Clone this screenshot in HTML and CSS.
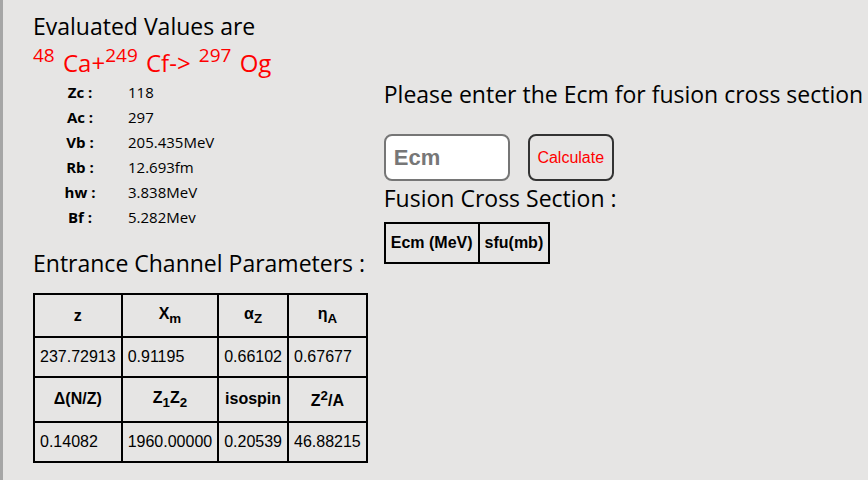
FILE: index.html
```html
<!DOCTYPE html>
<html lang="en">
  <head>
    <meta charset="UTF-8" />
    <title>Fusion Calculator</title>
    <link rel="stylesheet" href="styles.css">
  </head>
  <body>
    <div class="page">
      <div class="left">
        <h2 class="title">Evaluated Values are</h2>
        <div class="reaction"><sup>48</sup> Ca+<sup>249</sup> Cf-&gt; <sup>297</sup> Og</div>

        <div class="values">
          <b>Zc :</b><span>118</span>
          <b>Ac :</b><span>297</span>
          <b>Vb :</b><span>205.435MeV</span>
          <b>Rb :</b><span>12.693fm</span>
          <b>hw :</b><span>3.838MeV</span>
          <b>Bf :</b><span>5.282Mev</span>
        </div>

        <h2 class="entrance">Entrance Channel Parameters :</h2>
        <table class="grid">
          <tr>
            <th>z</th>
            <th>X<sub>m</sub></th>
            <th>&alpha;<sub>Z</sub></th>
            <th>&eta;<sub>A</sub></th>
          </tr>
          <tr>
            <td>237.72913</td>
            <td>0.91195</td>
            <td>0.66102</td>
            <td>0.67677</td>
          </tr>
          <tr>
            <th>&Delta;(N/Z)</th>
            <th>Z<sub>1</sub>Z<sub>2</sub></th>
            <th>isospin</th>
            <th>Z<sup>2</sup>/A</th>
          </tr>
          <tr>
            <td>0.14082</td>
            <td>1960.00000</td>
            <td>0.20539</td>
            <td>46.88215</td>
          </tr>
        </table>
      </div>

      <div class="right">
        <h2 class="prompt">Please enter the Ecm for fusion cross section</h2>
        <div class="form">
          <input type="number" id="ecm" placeholder="Ecm" />
          <button>Calculate</button>
        </div>
        <h2 class="fusion">Fusion Cross Section :</h2>
        <table class="grid">
          <tr>
            <th>Ecm (MeV)</th>
            <th>sfu(mb)</th>
          </tr>
        </table>
      </div>
    </div>
  </body>
</html>
```

FILE: styles.css
```css
html {
  background-color: #e6e5e4;
}

body {
  margin: 0;
  height: 480px;
  overflow: hidden;
  border-left: 3px solid #a6a6a6;
  color: #000;
  font-family: "Open Sans", sans-serif;
}

.page {
  display: flex;
  gap: 16px;
  padding-left: 30px;
}

.left {
  flex: none;
}

.right {
  flex: none;
  white-space: nowrap;
}

h2 {
  font-size: 23px;
  font-weight: 400;
  line-height: 28px;
  margin: 0;
}

.title {
  margin-top: 12px;
}

.reaction {
  margin-top: 8px;
  color: red;
  font-size: 24px;
  line-height: 30px;
  word-spacing: 2px;
}

.reaction sup {
  font-size: 19px;
  line-height: 0;
  vertical-align: 10px;
}

.values {
  display: grid;
  grid-template-columns: 36px auto;
  column-gap: 30px;
  margin: 2px 0 0 29px;
  font-size: 15px;
  line-height: 25px;
}

.values b {
  text-align: center;
  white-space: nowrap;
}

.entrance {
  margin-top: 19px;
}

.grid {
  margin-top: 16px;
  border-collapse: collapse;
  font-family: "Liberation Sans", Arial, sans-serif;
  font-size: 16px;
}

.grid th,
.grid td {
  border: 2px solid #000;
  padding: 10px 5px;
}

.grid td {
  text-align: left;
}

.prompt {
  margin-top: 80px;
}

.form {
  display: flex;
  gap: 18px;
  margin-top: 26px;
}

input {
  box-sizing: border-box;
  width: 126px;
  height: 47px;
  padding: 0 8px;
  border: 2px solid #767676;
  border-radius: 8px;
  background: #fff;
  font-family: "Liberation Sans", Arial, sans-serif;
  font-size: 22px;
  font-weight: bold;
}

input::placeholder {
  color: #777;
}

button {
  box-sizing: border-box;
  width: 86px;
  height: 47px;
  border: 2px solid #333;
  border-radius: 8px;
  background-color: #e6e5e4;
  color: red;
  font-family: "Liberation Sans", Arial, sans-serif;
  font-size: 16px;
  cursor: pointer;
}

.fusion {
  margin-top: 3px;
}

.right .grid {
  margin-top: 10px;
}
```
